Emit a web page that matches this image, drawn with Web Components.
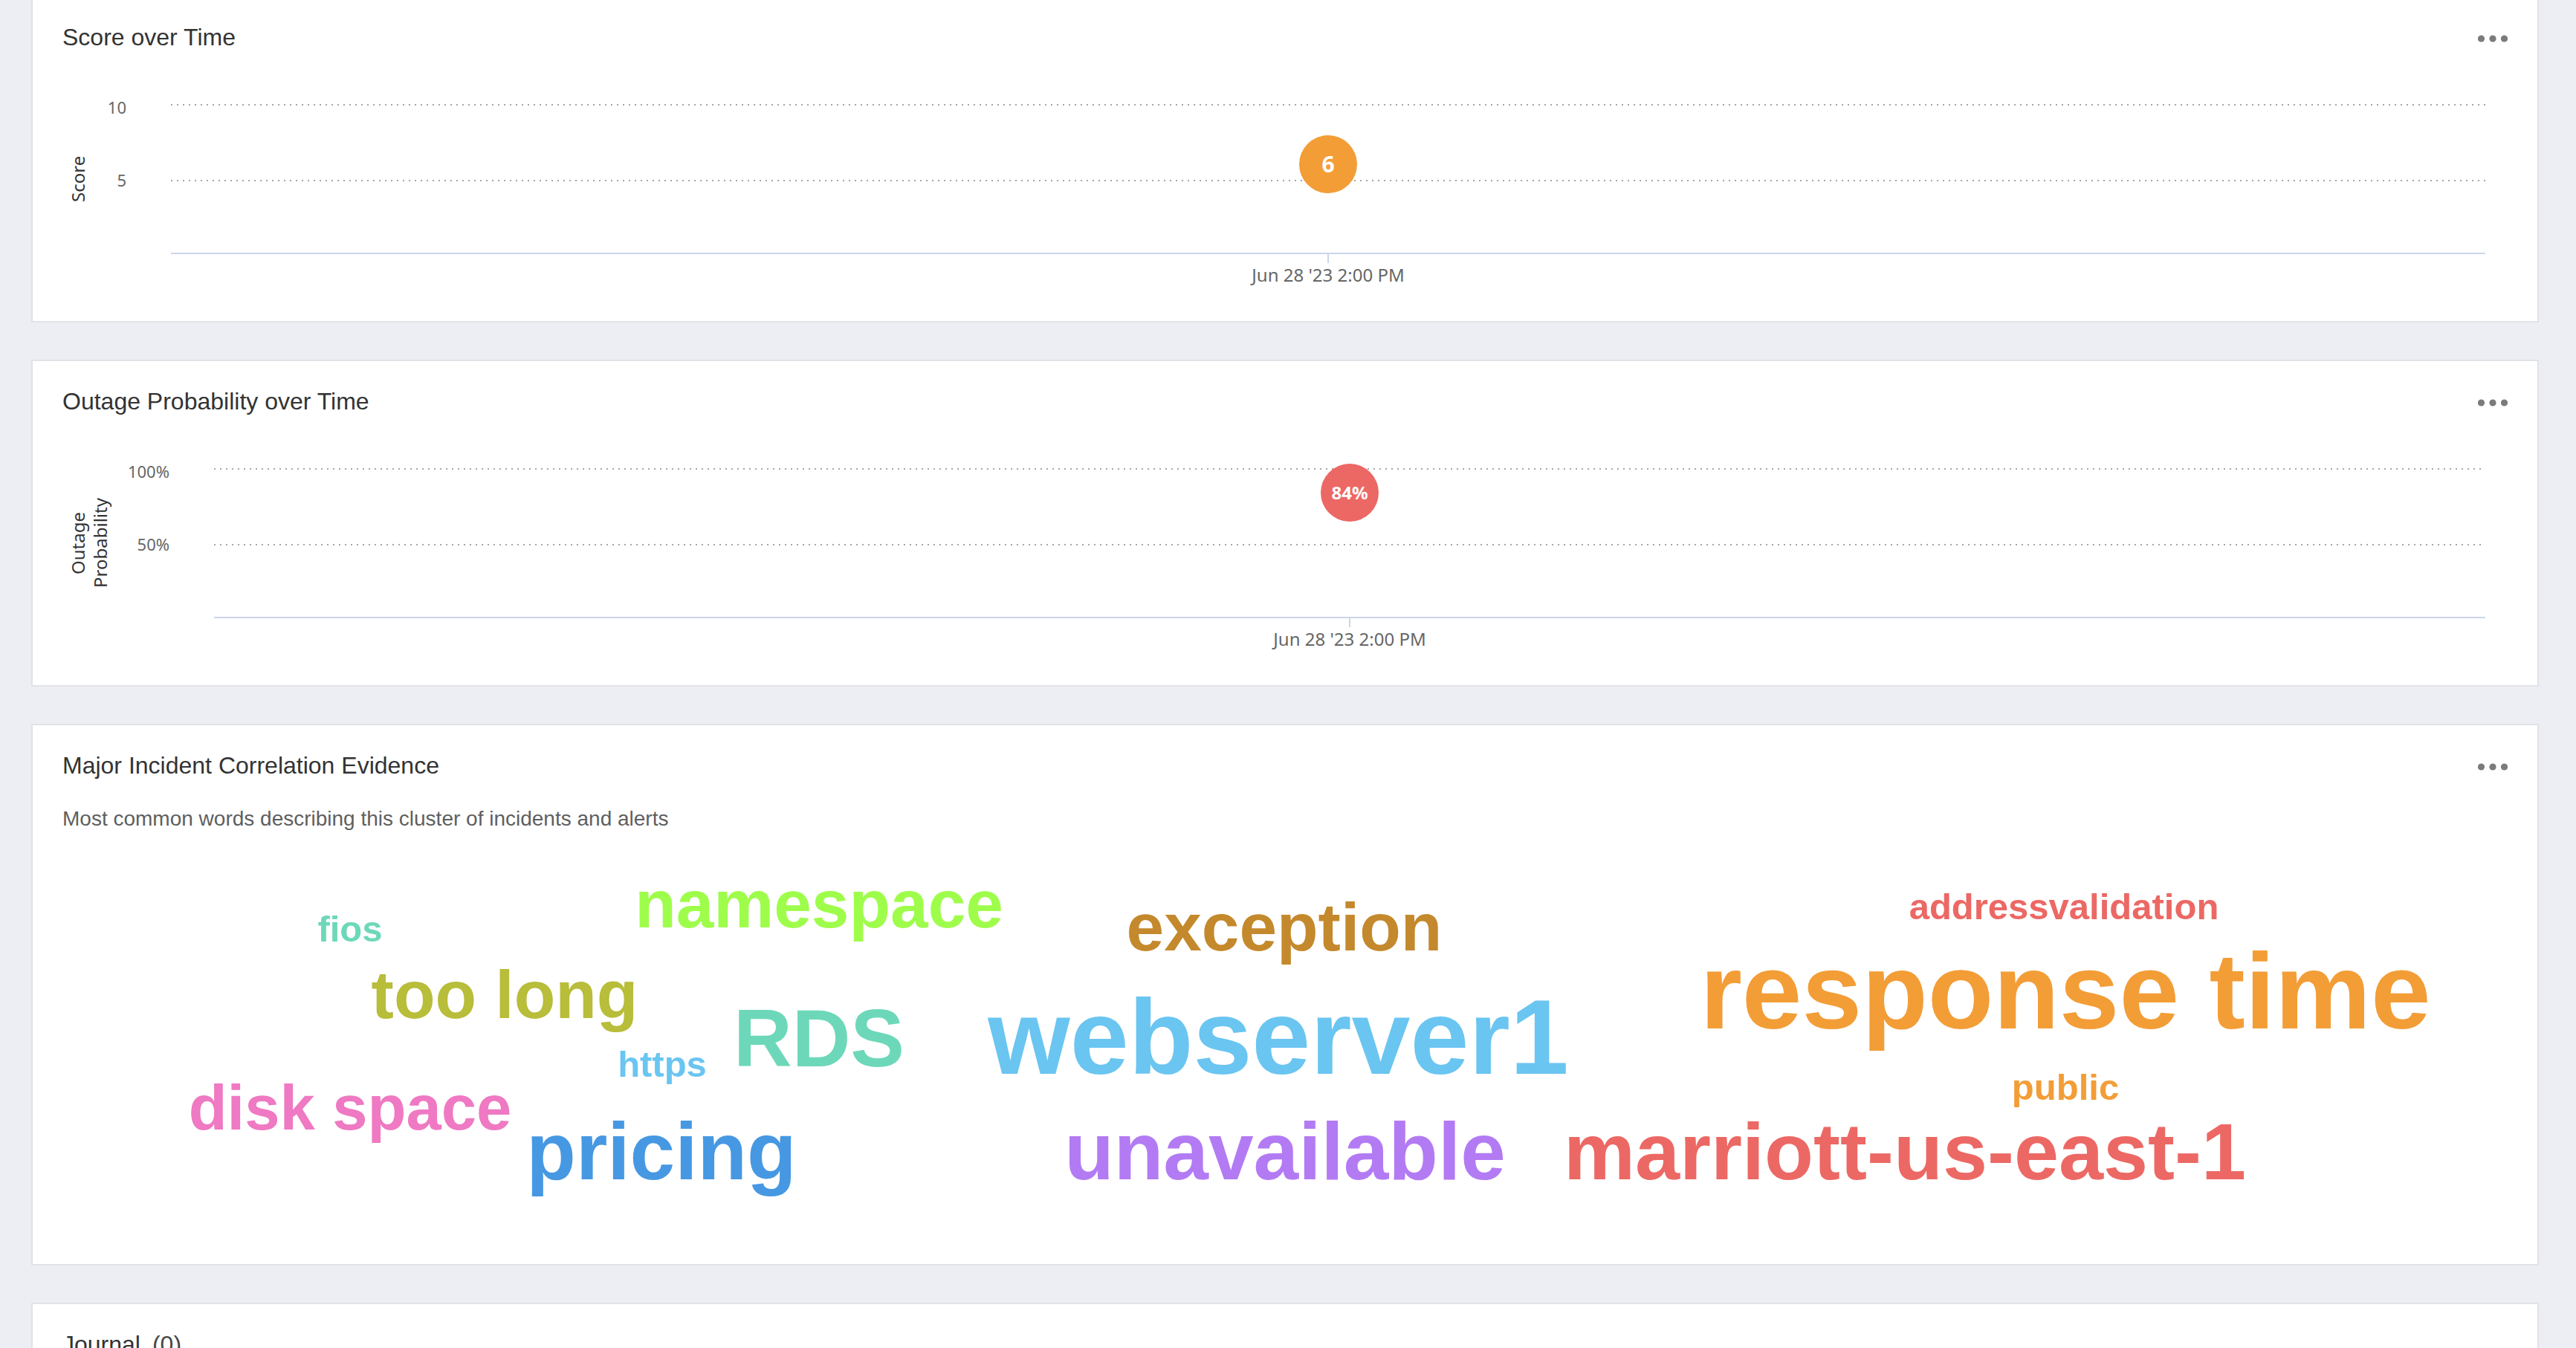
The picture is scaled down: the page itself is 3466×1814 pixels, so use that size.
<!DOCTYPE html>
<html lang="en">
<head>
<meta charset="utf-8">
<title>Major incident</title>
<style>
  html, body { margin: 0; }
  body {
    background: #edeef3;
    font-family: "Liberation Sans", Arial, sans-serif;
    color: #333;
  }
</style>
</head>
<body>
<incident-page>
  <dashboard-card heading="Score over Time" continued>
    <timeline-chart axis-title="Score" max="10" value="6" label="6" ticks="10,5" date="Jun 28 '23 2:00 PM"
      style="--axis-width:146px; --marker:#f39d37; --marker-size:30px"></timeline-chart>
  </dashboard-card>
  <dashboard-card heading="Outage Probability over Time">
    <timeline-chart axis-title="Outage|Probability" max="100" value="84" label="84%" ticks="100%,50%" date="Jun 28 '23 2:00 PM"
      style="--axis-width:204px; --marker:#ec6864; --marker-size:24px"></timeline-chart>
  </dashboard-card>
  <dashboard-card heading="Major Incident Correlation Evidence">
    <word-cloud caption="Most common words describing this cluster of incidents and alerts"></word-cloud>
  </dashboard-card>
  <dashboard-card heading="Journal" count="(0)" no-menu></dashboard-card>
</incident-page>

<script>
class IncidentPage extends HTMLElement {
  constructor() {
    super();
    this.attachShadow({ mode: 'open' }).innerHTML = `
      <style>
        :host { display: block; height: 100vh; overflow: hidden; }
        main { display: flex; flex-direction: column; gap: 50px; padding: 0 50px 50px 42px; }
      </style>
      <main><slot></slot></main>`;
  }
}

class DashboardCard extends HTMLElement {
  connectedCallback() {
    const count = this.getAttribute('count');
    this.attachShadow({ mode: 'open' }).innerHTML = `
      <style>
        :host { display: block; background: #fff; border: 2px solid #e1e2e7; padding: 36px 38px 46px 40px; }
        :host([continued]) { border-top: 0; padding-top: 32px; }
        header { display: flex; justify-content: space-between; align-items: center; height: 36px; }
        h2 { margin: 0; font-size: 32px; line-height: 36px; font-weight: 400; color: #333; }
        h2 span { margin-left: 16px; color: #484848; }
        button { display: flex; border: 0; padding: 12px 2px 8px; background: none; cursor: pointer; }
        svg { display: block; width: 40px; height: 10px; fill: #7b7b7b; }
      </style>
      <section>
        <header>
          <h2>${this.getAttribute('heading')}${count ? `<span>${count}</span>` : ''}</h2>
          ${this.hasAttribute('no-menu') ? '' : `<button type="button" aria-label="More options">
            <svg viewBox="0 0 40 10"><circle cx="4.5" cy="5" r="4.6"/><circle cx="20" cy="5" r="4.6"/><circle cx="35.5" cy="5" r="4.6"/></svg>
          </button>`}
        </header>
        <slot></slot>
      </section>`;
  }
}

class TimelineChart extends HTMLElement {
  connectedCallback() {
    const get = name => this.getAttribute(name);
    const fromTop = 1 - get('value') / get('max');
    this.attachShadow({ mode: 'open' }).innerHTML = `
      <style>
        :host { display: flex; margin-top: 60px; font-family: "Noto Sans", "Open Sans", sans-serif; color: #666; }
        .axis { flex: none; width: var(--axis-width); box-sizing: border-box; padding: 0 60px 0 6px;
                display: flex; justify-content: space-between; }
        .title { height: 226px; writing-mode: vertical-rl; transform: rotate(180deg); text-align: center;
                 font-size: 24px; line-height: 30px; color: #333; }
        .ticks { display: flex; flex-direction: column; gap: 66px; text-align: right; font-size: 22px; line-height: 32px; }
        .plot { flex: 1; margin-right: 32px; padding-top: 12px; }
        .area { position: relative; height: 202px; display: flex; flex-direction: column; }
        .line { height: 2px; background: repeating-linear-gradient(90deg, #a6a6a6 0 2px, #fff 2px 8px); }
        .line + .line { margin-top: 100px; }
        .base { height: 2px; margin-top: auto; background: #ccd6eb; }
        .marker { position: absolute; left: 50%; top: calc(${fromTop} * 200px + 1px); width: 78px; height: 78px;
                  margin: -39px 0 0 -39px; border-radius: 50%; background: var(--marker); color: #fff;
                  display: flex; align-items: center; justify-content: center;
                  font-size: var(--marker-size); line-height: 32px; font-weight: 700; }
        .date { display: flex; flex-direction: column; align-items: center; font-size: 24px; line-height: 32px; }
        .date::before { content: ""; width: 2px; height: 12px; background: #ccd6eb; }
      </style>
      <div class="axis">
        <div class="title">${get('axis-title').split('|').join('<br>')}</div>
        <div class="ticks">${get('ticks').split(',').map(t => `<span>${t}</span>`).join('')}</div>
      </div>
      <div class="plot">
        <div class="area">
          <div class="line"></div><div class="line"></div><div class="base"></div>
          <div class="marker">${get('label')}</div>
        </div>
        <div class="date">${get('date')}</div>
      </div>`;
  }
}

/* text, centre x, baseline y, size, colour */
const WORDS = [
  ['fios', 387, 143, 49, '#6dd8b9'],
  ['namespace', 1018, 124, 91, '#9efd4b'],
  ['exception', 1644, 155, 91, '#c4892c'],
  ['addressvalidation', 2693, 113, 49, '#ec6864'],
  ['too long', 595, 246, 91, '#b8bd3a'],
  ['response time', 2695, 260, 145, '#f39d37'],
  ['https', 807, 325, 49, '#6ac5f1'],
  ['RDS', 1018, 311, 109, '#6dd8b9'],
  ['webserver1', 1636, 321, 142, '#6ac5f1'],
  ['public', 2695, 356, 49, '#f39d37'],
  ['disk space', 387, 396, 85, '#ef79c2'],
  ['pricing', 806, 463, 109, '#4698e2'],
  ['unavailable', 1645, 463, 109, '#b37bf3'],
  ['marriott-us-east-1', 2479, 463, 108, '#ec6864']
];

class WordCloud extends HTMLElement {
  connectedCallback() {
    this.attachShadow({ mode: 'open' }).innerHTML = `
      <style>
        :host { display: block; }
        p { margin: 38px 0 6px; font-size: 28px; line-height: 32px; color: #5f5f5f; }
        svg { display: block; width: 100%; height: auto; font-weight: 700; text-anchor: middle; }
      </style>
      <p>${this.getAttribute('caption')}</p>
      <svg viewBox="0 0 3292 531" role="img" aria-label="Word cloud">
        ${WORDS.map(([t, x, y, s, c]) => `<text x="${x}" y="${y}" font-size="${s}" fill="${c}">${t}</text>`).join('')}
      </svg>`;
  }
}

customElements.define('incident-page', IncidentPage);
customElements.define('dashboard-card', DashboardCard);
customElements.define('timeline-chart', TimelineChart);
customElements.define('word-cloud', WordCloud);
</script>
</body>
</html>
